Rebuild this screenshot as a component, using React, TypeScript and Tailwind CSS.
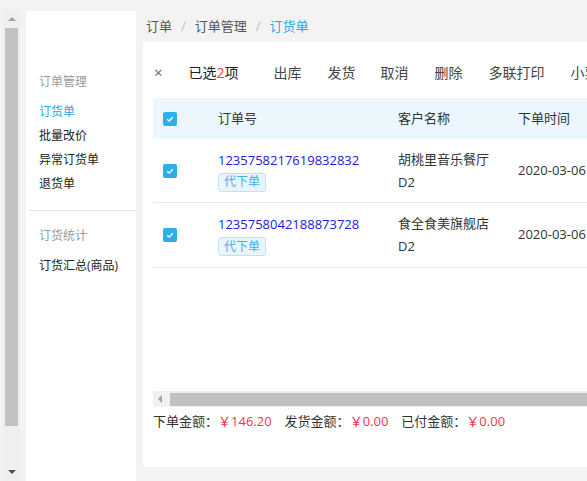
import React from "react";

const font = { fontFamily: '"Open Sans", "Noto Sans CJK SC", sans-serif' };

function Check() {
  return (
    <span className="flex h-[14px] w-[14px] items-center justify-center rounded-[2px] bg-[#2db0ea]">
      <svg width="10" height="10" viewBox="0 0 10 10">
        <path d="M2.2 5.2 L4.2 7 L7.8 3.2" fill="none" stroke="white" strokeWidth="1.3" />
      </svg>
    </span>
  );
}

function Tag() {
  return (
    <span className="inline-flex h-[19px] items-center rounded-[3px] border border-[#bfe3f6] bg-[#e8f5fd] px-[5px] text-[12px] text-[#4aaee6]">
      代下单
    </span>
  );
}

const rows = [
  { no: "1235758217619832832", name: "胡桃里音乐餐厅", date: "2020-03-06", h: "h-[64px]" },
  { no: "1235758042188873728", name: "食全食美旗舰店", date: "2020-03-06", h: "h-[65px]" },
];

export default function App() {
  return (
    <div className="flex h-[481px] w-[587px] overflow-hidden bg-[#f3f3f3] text-[#333]" style={font}>
      {/* fake vertical scrollbar */}
      <div className="ml-[3px] mt-[10px] flex w-[17px] flex-col items-center bg-[#efefef]">
        <div className="mt-[7px] h-0 w-0 border-x-[4px] border-b-[4px] border-x-transparent border-b-[#a3a3a3]" />
        <div className="mt-[7px] h-[398px] w-[13px] bg-[#c1c1c1]" />
        <div className="mt-[44px] h-0 w-0 border-x-[4px] border-t-[4px] border-x-transparent border-t-[#505050]" />
      </div>

      {/* sidebar */}
      <div className="ml-[6px] mt-[11px] w-[110px] bg-white">
        <div className="flex flex-col pl-[13px] pt-[59px] text-[12px] leading-[24px]">
          <div className="text-[#999]">订单管理</div>
          <div className="mt-[6px] text-[#29a6e2]">订货单</div>
          <div className="text-[#222]">批量改价</div>
          <div className="text-[#222]">异常订货单</div>
          <div className="text-[#222]">退货单</div>
        </div>
        <div className="ml-[3px] mt-[14px] h-px bg-[#e5e5e5]" />
        <div className="flex flex-col pl-[13px] pt-[13px] text-[12px] leading-[24px]">
          <div className="text-[#999]">订货统计</div>
          <div className="mt-[6px] text-[#222]">订货汇总(商品)</div>
        </div>
      </div>

      {/* content */}
      <div className="ml-[7px] mt-[11px] flex min-w-0 flex-1 flex-col">
        <div className="flex h-[31px] items-center gap-[9px] pl-[3px] pt-[1px] text-[13px] text-[#555]">
          <span>订单</span>
          <span className="text-[#bbb]">/</span>
          <span>订单管理</span>
          <span className="text-[#bbb]">/</span>
          <span className="text-[#29a6e2]">订货单</span>
        </div>
        <div className="flex h-[425px] flex-col overflow-hidden bg-white pl-[10px]">
          {/* toolbar */}
          <div className="flex h-[56px] items-center whitespace-nowrap pt-[4px] text-[14px] text-[#444]">
            <span className="ml-[1px] text-[15px] leading-none text-[#666]">×</span>
            <span className="ml-[26px] text-[#222]">
              已选<span className="text-[#f5334f]">2</span>项
            </span>
            <span className="ml-[19px] h-[20px] w-px bg-[#e3e3e3]" />
            <span className="ml-[16px]">出库</span>
            <span className="ml-[26px]">发货</span>
            <span className="ml-[25px]">取消</span>
            <span className="ml-[26px]">删除</span>
            <span className="ml-[26px]">多联打印</span>
            <span className="ml-[26px]">小票打印</span>
          </div>
          {/* table */}
          <div className="flex flex-col text-[13px]">
            <div className="flex h-[41px] items-center whitespace-nowrap bg-[#ebf7fd] text-[#333]">
              <div className="ml-[10px] w-[55px]"><Check /></div>
              <div className="w-[180px]">订单号</div>
              <div className="w-[120px]">客户名称</div>
              <div>下单时间</div>
            </div>
            {rows.map((r) => (
              <div key={r.no} className={`flex ${r.h} items-center whitespace-nowrap border-b border-[#e9e9ef]`}>
                <div className="ml-[10px] w-[55px]"><Check /></div>
                <div className="flex w-[180px] flex-col items-start gap-[3px]">
                  <span className="leading-[20px] text-[#2020dc]">{r.no}</span>
                  <Tag />
                </div>
                <div className="flex w-[120px] flex-col leading-[23px] text-[#333]">
                  <span>{r.name}</span>
                  <span>D2</span>
                </div>
                <div className="text-[#333]">{r.date}</div>
              </div>
            ))}
          </div>
          <div className="flex-1" />
          {/* horizontal scrollbar */}
          <div className="flex h-[16px] items-center bg-[#f1f1f1]">
            <div className="ml-[5px] h-0 w-0 border-y-[4px] border-r-[4px] border-y-transparent border-r-[#a3a3a3]" />
            <div className="ml-[8px] h-[13px] flex-1 bg-[#c1c1c1]" />
          </div>
          {/* totals */}
          <div className="mb-[37px] mt-[5px] flex items-center whitespace-nowrap text-[13px] leading-[18px] text-[#333]">
            <span>下单金额：</span>
            <span className="text-[#f5334f]">￥146.20</span>
            <span className="ml-[13px]">发货金额：</span>
            <span className="text-[#f5334f]">￥0.00</span>
            <span className="ml-[13px]">已付金额：</span>
            <span className="text-[#f5334f]">￥0.00</span>
          </div>
        </div>
        <div className="h-[14px]" />
      </div>
    </div>
  );
}
